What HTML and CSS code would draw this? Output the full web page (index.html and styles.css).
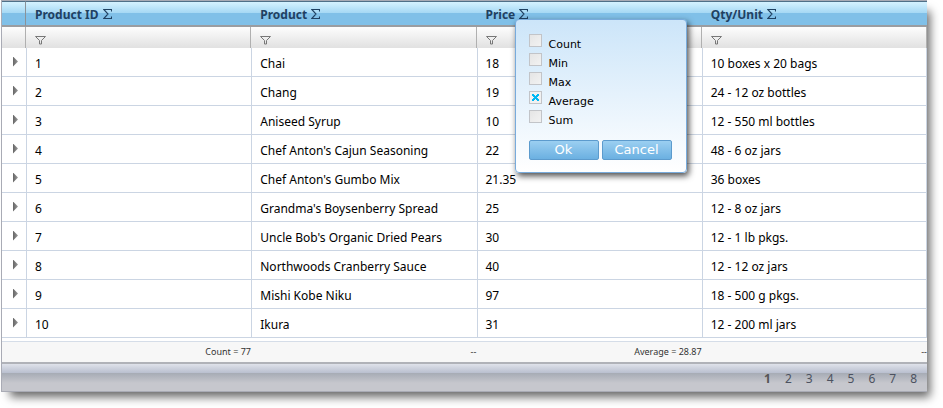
FILE: index.html
```html
<!DOCTYPE html>
<html lang="en">
<head>
<meta charset="utf-8">
<title>Products</title>
<link rel="stylesheet" href="styles.css">
</head>
<body>
<svg class="sprite" aria-hidden="true">
  <symbol id="sigma" viewBox="0 0 9 10"><path d="M8.5 2.5V.5H.8L5 5 .8 9.500H8.500V7.500" fill="none" stroke="currentColor" stroke-width="1.100"/></symbol>
  <symbol id="funnel" viewBox="0 0 11 9"><path d="M.5.5h10L6.500 4.500v3.500h-2V4.500z" fill="none" stroke="currentColor"/></symbol>
</svg>
<main class="grid">
  <table class="data">
    <colgroup><col class="expander-col"><col><col><col><col></colgroup>
    <thead>
      <tr class="headings">
        <th></th>
        <th>Product ID <button class="icon" aria-label="Summaries for Product ID"><svg class="sigma"><use href="#sigma"/></svg></button></th>
        <th>Product <button class="icon" aria-label="Summaries for Product"><svg class="sigma"><use href="#sigma"/></svg></button></th>
        <th class="anchor">Price <button class="icon" aria-label="Summaries for Price"><svg class="sigma"><use href="#sigma"/></svg></button>
          <form class="popup">
            <label><input type="checkbox"><span>Count</span></label>
            <label><input type="checkbox"><span>Min</span></label>
            <label><input type="checkbox"><span>Max</span></label>
            <label><input type="checkbox" checked><span>Average</span></label>
            <label><input type="checkbox"><span>Sum</span></label>
            <div class="actions"><button type="button">Ok</button><button type="button">Cancel</button></div>
          </form>
        </th>
        <th>Qty/Unit <button class="icon" aria-label="Summaries for Qty/Unit"><svg class="sigma"><use href="#sigma"/></svg></button></th>
      </tr>
      <tr class="filters">
        <td></td>
        <td><button class="icon" aria-label="Filter Product ID"><svg class="funnel"><use href="#funnel"/></svg></button></td>
        <td><button class="icon" aria-label="Filter Product"><svg class="funnel"><use href="#funnel"/></svg></button></td>
        <td><button class="icon" aria-label="Filter Price"><svg class="funnel"><use href="#funnel"/></svg></button></td>
        <td><button class="icon" aria-label="Filter Qty/Unit"><svg class="funnel"><use href="#funnel"/></svg></button></td>
      </tr>
    </thead>
    <tbody>
      <tr><td><button class="expand" aria-label="Expand row"></button></td><td>1</td><td>Chai</td><td>18</td><td>10 boxes x 20 bags</td></tr>
      <tr><td><button class="expand" aria-label="Expand row"></button></td><td>2</td><td>Chang</td><td>19</td><td>24 - 12 oz bottles</td></tr>
      <tr><td><button class="expand" aria-label="Expand row"></button></td><td>3</td><td>Aniseed Syrup</td><td>10</td><td>12 - 550 ml bottles</td></tr>
      <tr><td><button class="expand" aria-label="Expand row"></button></td><td>4</td><td>Chef Anton's Cajun Seasoning</td><td>22</td><td>48 - 6 oz jars</td></tr>
      <tr><td><button class="expand" aria-label="Expand row"></button></td><td>5</td><td>Chef Anton's Gumbo Mix</td><td>21.35</td><td>36 boxes</td></tr>
      <tr><td><button class="expand" aria-label="Expand row"></button></td><td>6</td><td>Grandma's Boysenberry Spread</td><td>25</td><td>12 - 8 oz jars</td></tr>
      <tr><td><button class="expand" aria-label="Expand row"></button></td><td>7</td><td>Uncle Bob's Organic Dried Pears</td><td>30</td><td>12 - 1 lb pkgs.</td></tr>
      <tr><td><button class="expand" aria-label="Expand row"></button></td><td>8</td><td>Northwoods Cranberry Sauce</td><td>40</td><td>12 - 12 oz jars</td></tr>
      <tr><td><button class="expand" aria-label="Expand row"></button></td><td>9</td><td>Mishi Kobe Niku</td><td>97</td><td>18 - 500 g pkgs.</td></tr>
      <tr><td><button class="expand" aria-label="Expand row"></button></td><td>10</td><td>Ikura</td><td>31</td><td>12 - 200 ml jars</td></tr>
    </tbody>
  </table>
  <div class="summary">
    <span>Count = 77</span><span>--</span><span>Average = 28.87</span><span>--</span>
  </div>
  <nav class="pager" aria-label="Pages">
    <a class="current" href="#1">1</a><a href="#2">2</a><a href="#3">3</a><a href="#4">4</a><a href="#5">5</a><a href="#6">6</a><a href="#7">7</a><a href="#8">8</a>
  </nav>
</main>
</body>
</html>
```
FILE: styles.css
```css
* {
  box-sizing: border-box;
}

body {
  margin: 0;
  min-height: 100vh;
  padding-bottom: 16px;
  background: #fff;
  color: #000;
  font: 12px/16px "Noto Sans", "Open Sans", sans-serif;
}

button {
  margin: 0;
  padding: 0;
  border: 0;
  background: none;
  font: inherit;
}

.sprite {
  position: absolute;
  width: 0;
  height: 0;
}

.grid {
  margin: 0 16px 0 1px;
  border: 1px solid #a9abb5;
  border-width: 1px 0 1px 1px;
  background: #fff;
  box-shadow: 6px 8px 9px -3px rgba(0, 0, 0, 0.6);
}

.data {
  width: 100%;
  table-layout: fixed;
  border-collapse: separate;
  border-spacing: 0;
}

.expander-col {
  width: 24px;
}

.data th,
.data td {
  padding: 0 9px;
  text-align: left;
  white-space: nowrap;
}

.headings th {
  height: 26px;
  padding-top: 2px;
  border-top: 1px solid #4f7088;
  border-bottom: 2px solid #9a9da1;
  background: linear-gradient(#d5f2ff 0, #a5d8f4 11px, #80c0e8 11px, #80c0e8 100%);
  color: #1f4162;
}

.headings th:first-child {
  border-right: 1px solid #8a9299;
}

.filters td {
  height: 21px;
  border-right: 1px solid #b0b0b0;
  background: linear-gradient(#fdfdfd, #e1e1e1);
  color: #777;
}

.icon {
  display: inline-block;
  color: inherit;
  line-height: 0;
}

.headings .icon {
  padding: 0 0 1px 1px;
}

.sigma {
  width: 9px;
  height: 10px;
}

.funnel {
  width: 11px;
  height: 9px;
}

.filters .icon {
  display: block;
  padding-top: 5px;
}

.data tbody td {
  height: 29px;
  padding: 4px 8px 0;
  border-bottom: 1px solid #cbd5e3;
  border-left: 1px solid #cbd5e3;
}

.data tbody td:first-child {
  padding: 0 11px 1px;
  border-left: 0;
}

.data tbody td:last-child {
  border-right: 1px solid #cbd5e3;
}

.expand {
  display: block;
  width: 5px;
  height: 10px;
  background: linear-gradient(90deg, #666, #999);
  clip-path: polygon(0 0, 100% 50%, 0 100%);
}

.anchor {
  position: relative;
}

.popup {
  position: absolute;
  z-index: 1;
  top: 17px;
  left: 38px;
  width: 172px;
  padding: 14px 14px 12px 13px;
  border: 1px solid #78abdc;
  border-radius: 4px;
  background: linear-gradient(#cce5f9, #fff);
  box-shadow: 2px 3px 6px rgba(0, 0, 0, 0.7);
  color: #000;
  font: 11px/14px "DejaVu Sans", sans-serif;
}

.popup label {
  display: flex;
  align-items: flex-start;
  gap: 7px;
  height: 19px;
}

.popup label span {
  padding-top: 4px;
}

.popup input {
  appearance: none;
  width: 13px;
  height: 13px;
  margin: 0;
  border: 1px solid #c2c4c8;
  background: linear-gradient(135deg, #e5e5e5, #f2f2f2);
}

.popup input:checked {
  background: linear-gradient(45deg, transparent 38%, #00b8f4 38%, #00b8f4 62%, transparent 62%) center / 7px 7px no-repeat,
    linear-gradient(-45deg, transparent 38%, #00b8f4 38%, #00b8f4 62%, transparent 62%) center / 7px 7px no-repeat,
    #f1f1f1;
}

.actions {
  display: flex;
  gap: 3px;
  padding-top: 11px;
}

.actions button {
  flex: 1;
  height: 20px;
  border: 1px solid #5c9bcd;
  border-radius: 2px;
  background: linear-gradient(#9bcff1, #6bb0e1);
  color: #fff;
  font-size: 13px;
}

.summary {
  display: grid;
  grid-template-columns: 249px repeat(3, 1fr);
  margin-top: 3px;
  border-top: 1px solid #d5dde8;
  border-bottom: 2px solid #b0b2b8;
  background: #f7f7f7;
  color: #333;
  font-size: 9px;
  line-height: 20px;
  text-align: right;
}

.pager {
  display: flex;
  justify-content: flex-end;
  gap: 14px;
  height: 27px;
  padding: 7px 10px 0 0;
  background: linear-gradient(#dfe2ea 0, #b9bfcf 9px, #a6abb5 9px, #c6c7cd 19px, #c6c7cd 100%);
}

.pager a {
  color: #4c5260;
  text-decoration: none;
}

.pager .current {
  color: #555;
  font-weight: bold;
}
```
